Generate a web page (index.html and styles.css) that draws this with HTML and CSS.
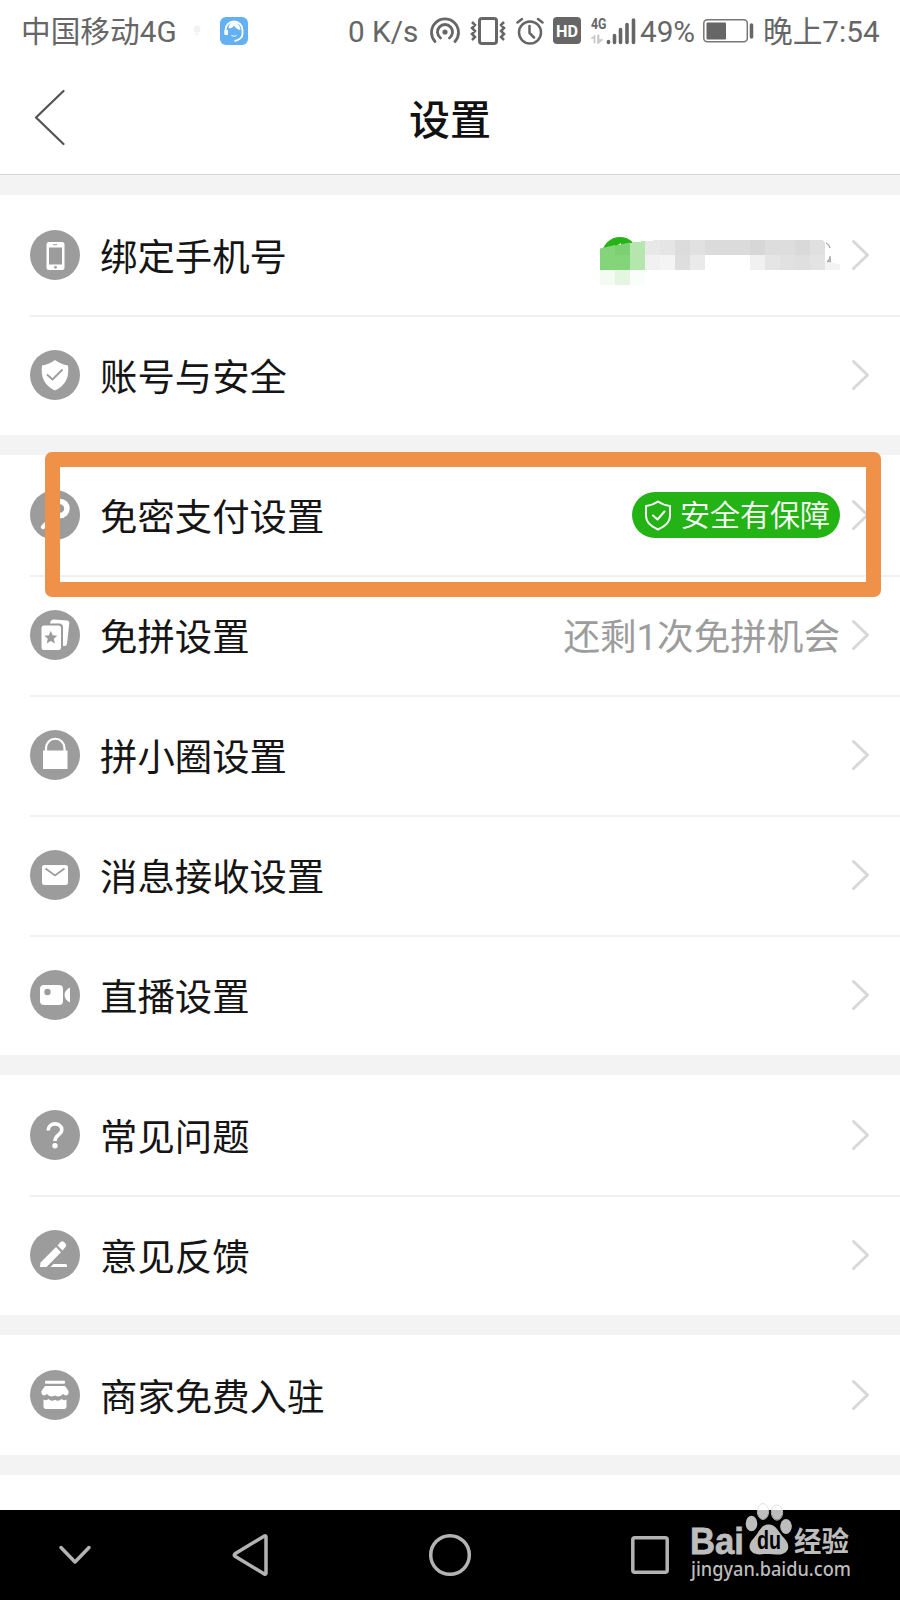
FILE: index.html
```html
<!DOCTYPE html>
<html lang="zh-CN">
<head>
<meta charset="utf-8">
<title>设置</title>
<link rel="stylesheet" href="styles.css">
</head>
<body>
<svg class="defs" width="0" height="0">
  <symbol id="chevron" viewBox="0 0 20 34"><path d="M3.500 3.500 17.500 17 3.500 30.500" fill="none" stroke="#d8d8d8" stroke-width="3" stroke-linecap="round" stroke-linejoin="round"/></symbol>
</svg>
<div class="phone">
  <div class="status">
    <span class="carrier">中国移动4G</span>
    <svg class="dot" viewBox="0 0 8 12"><circle cx="4" cy="4" r="3.500"/><circle cx="4" cy="9" r="1.500"/></svg>
    <svg class="app" viewBox="0 0 28 28"><rect width="28" height="28" rx="6" fill="#63b0f3"/><path d="M5.500 17v-4a8.500 8.500 0 0 1 17 0v4c0 3-3 6-8 7" fill="none" stroke="#fff" stroke-width="1.800"/><path d="M4.500 13H8v5H4.500zM8.500 11c1-8 11-8 12 2-3-.5-5-2-6.500-4.500-1 2-3 3.500-5.500 2.500z" fill="#fff"/><path d="M11.500 18.500q3 1.500 5 0" fill="none" stroke="#fff"/></svg>
    <span class="speed">0 K/s</span>
    <svg class="hotspot" viewBox="0 0 30 28" fill="none" stroke="#666" stroke-width="2.800" stroke-linecap="round"><circle cx="15" cy="15" r="2.600" fill="#666" stroke="none"/><path d="M10.500 21a7.500 7.500 0 1 1 9 0M5 24.500a13.500 13.500 0 1 1 20 0"/></svg>
    <svg class="vibrate" viewBox="0 0 36 28" fill="none" stroke="#666" stroke-width="2.500"><rect x="9.500" y="1.500" width="17" height="25" rx="2.500" stroke-width="3"/><path d="M2 5l3 3-3 3 3 3-3 3 3 3-3 3M34 5l-3 3 3 3-3 3 3 3-3 3 3 3"/></svg>
    <svg class="alarm" viewBox="0 0 28 28" fill="none" stroke="#666" stroke-width="2.500" stroke-linecap="round"><circle cx="14" cy="15.500" r="11"/><path d="M13.500 9v7l4.500 4.500M1.500 5.500 6 2M26.500 5.500 22 2"/></svg>
    <svg class="hd" viewBox="0 0 28 28"><rect width="28" height="27" rx="4" fill="#666"/><text x="3" y="19.500" font-size="16.500" font-weight="700" fill="#fff" textLength="22" lengthAdjust="spacingAndGlyphs">HD</text></svg>
    <svg class="signal" viewBox="0 0 46 28"><text x="0" y="11.500" font-size="15" font-weight="700" fill="#666" textLength="15.500" lengthAdjust="spacingAndGlyphs">4G</text><path d="M0 21.500 4 18v8H3v-4.500zM6.500 18h1.500v4.500h4L7.500 26.500h-1z" fill="#ccc" stroke="#ccc" stroke-width=".8"/><path d="M17.500 25.500v-1M23.500 25.500v-7M29.500 25.500v-13M36 25.500v-18M42.500 25.500V3" stroke="#666" stroke-width="3.600" stroke-linecap="round"/></svg>
    <span class="percent">49%</span>
    <svg class="battery" viewBox="0 0 52 24"><rect x=".8" y=".8" width="43.500" height="22" rx="3.500" fill="none" stroke="#777" stroke-width="1.500"/><rect x="3.500" y="3.500" width="19.500" height="17" rx="1" fill="#666"/><path d="M48.500 6v12" stroke="#666" stroke-width="3.500" stroke-linecap="round"/></svg>
    <span class="time">晚上7:54</span>
  </div>
  <header class="title-bar">
    <svg class="back" viewBox="0 0 32 58"><path d="M29.500 3 2 29.500l27.500 26.500" fill="none" stroke="#555" stroke-width="2.300" stroke-linecap="round" stroke-linejoin="round"/></svg>
    <h1>设置</h1>
  </header>

  <section class="group">
    <div class="row"><svg class="icon" viewBox="0 0 50 50"><circle cx="25" cy="25" r="25"/><rect class="w" x="16.500" y="12" width="18" height="28" rx="2.500"/><path class="g" d="M19 17.500h13v17H19zM23 14.200h4v1h-4z"/><circle class="g" cx="25.500" cy="37.300" r="1.400"/></svg><span class="label">绑定手机号</span>
      <svg class="mosaic" viewBox="0 0 240 50" shape-rendering="crispEdges">
        <circle cx="20" cy="18" r="18" fill="#25b415" shape-rendering="auto"/>
        <path d="M0 33h45v15H0z" fill="#fff"/>
        <path d="M0 11.500 15 8v25H0z" fill="#84d47a" shape-rendering="auto"/><path d="M15 18h15v15H15z" fill="#84d47a"/><path d="M15 8.500l15-3V18H15z" fill="#7dd072" shape-rendering="auto"/>
        <path d="M30 5.800 45 4v29H30z" fill="#b5e6ae"/><path d="M0 33h15v15H0z" fill="#f3fbf2"/><path d="M15 33h15v15H15z" fill="#e4f5e1"/><path d="M30 33h15v15H30z" fill="#fafefa"/>
        <path d="M45 4l15-1v15H45z" fill="#e8e8e8"/><path d="M60 3h15v15H60z" fill="#e5e5e5"/><path d="M75 3h15v15H75z" fill="#dcdcdc"/><path d="M90 3h15v15H90z" fill="#e1e1e1"/><path d="M105 3h45v15h-45z" fill="#dbdbdb"/><path d="M150 3h15v15h-15z" fill="#d7d7d7"/><path d="M165 3h30v15h-30z" fill="#dddddd"/><path d="M195 3h15v15h-15z" fill="#d9d9d9"/><path d="M210 3h13l2 3v12h-15z" fill="#e0e0e0"/>
        <path d="M45 18h15v15H45z" fill="#f1f1f1"/><path d="M60 18h15v15H60z" fill="#f4f4f4"/><path d="M75 18h15v15H75z" fill="#dedede"/><path d="M90 18h15v15H90z" fill="#eaeaea"/><path d="M150 18h15v15h-15z" fill="#f1f1f1"/><path d="M165 18h15v15h-15z" fill="#e5e5e5"/><path d="M180 18h15v15h-15z" fill="#e1e1e1"/><path d="M195 18h15v15h-15z" fill="#dfdfdf"/><path d="M210 18h15v15h-15z" fill="#e3e3e3"/>
        <path d="M225 25.500h7l8 2v5.500h-15z" fill="#f3f3f3"/>
        <g shape-rendering="auto"><path d="M18 8l3-2v2z" fill="#e8f8e6"/><path d="M226 6q3 1 4 5M230 19q0 4-3 5.500h3.500z" fill="none" stroke="#aaa" stroke-width="1.300"/></g>
      </svg>
      <svg class="chev"><use href="#chevron"/></svg></div>
    <div class="row"><svg class="icon" viewBox="0 0 50 50"><circle cx="25" cy="25" r="25"/><path class="w" d="M25 10c4 3 8 4.500 13 5.500 1.500 11-2 20-13 25-11-5-14.500-14-13-25 5-1 9-2.500 13-5.500z"/><path class="gl" d="M17 24.500l5.500 5 10-10"/></svg><span class="label">账号与安全</span><svg class="chev"><use href="#chevron"/></svg></div>
  </section>

  <section class="group">
    <div class="row"><svg class="icon" viewBox="0 0 50 50"><circle cx="25" cy="25" r="25"/><circle cx="30" cy="18.500" r="7" fill="none" stroke="#fff" stroke-width="5.500"/><path d="M24.500 25.500 13 37" stroke="#fff" stroke-width="4.500" stroke-linecap="round"/></svg><span class="label">免密支付设置</span>
      <span class="badge"><svg viewBox="0 0 28 31" fill="none" stroke="#fff" stroke-width="2" stroke-linejoin="round" stroke-linecap="round"><path d="M14 1.500c4 2.800 7.500 4 12 4.500v10c0 6-5 10.500-12 13.500C7 26.500 2 22 2 16V6c4.500-.5 8-1.700 12-4.500z"/><path d="M9 15.500l4.500 4 7-8"/></svg><span class="badge-text">安全有保障</span></span>
      <svg class="chev"><use href="#chevron"/></svg></div>
    <div class="row"><svg class="icon" viewBox="0 0 50 50"><circle cx="25" cy="25" r="25"/><path class="w" d="M20 13.500q.5-4 4-4l13.500 1q2 .5 1.800 2.500l-2.300 21q-.5 2-2.500 2H33V17q-.5-3.500-3.500-3.500z"/><rect class="w" x="11.500" y="15.500" width="19.500" height="24.500" rx="2.500"/><path class="g" d="M20.800 20.800l1.900 4.500 4.600.4-3.500 3.100 1.100 4.600-4.100-2.400-4.100 2.400 1.100-4.600-3.500-3.100 4.600-.4z"/></svg><span class="label">免拼设置</span><span class="note">还剩1次免拼机会</span><svg class="chev"><use href="#chevron"/></svg></div>
    <div class="row"><svg class="icon" viewBox="0 0 50 50"><circle cx="25" cy="25" r="25"/><path class="w" d="M13 20.500h24.500V39H13z"/><path d="M16 21v-3a9 9 0 0 1 18.500 0v3" fill="none" stroke="#fff" stroke-width="2.200"/></svg><span class="label">拼小圈设置</span><svg class="chev"><use href="#chevron"/></svg></div>
    <div class="row"><svg class="icon" viewBox="0 0 50 50"><circle cx="25" cy="25" r="25"/><rect class="w" x="12" y="15" width="26" height="20" rx="2.500"/><path class="gl" d="M15.500 18.500l9.500 7 9.500-7"/></svg><span class="label">消息接收设置</span><svg class="chev"><use href="#chevron"/></svg></div>
    <div class="row"><svg class="icon" viewBox="0 0 50 50"><circle cx="25" cy="25" r="25"/><rect class="w" x="10" y="15" width="23" height="20" rx="4"/><circle class="g" cx="17.500" cy="22" r="3.200"/><path class="w" d="M40 17.500v15q-5.500-3-5.500-7.500t5.500-7.500z"/></svg><span class="label">直播设置</span><svg class="chev"><use href="#chevron"/></svg></div>
  </section>

  <section class="group">
    <div class="row"><svg class="icon" viewBox="0 0 50 50"><circle cx="25" cy="25" r="25"/><path d="M18.200 20.500c0-9 13.600-8.500 13.600-.8 0 5-6.800 5-6.800 11.300" fill="none" stroke="#fff" stroke-width="3.600"/><circle class="w" cx="25" cy="35.700" r="2.700"/></svg><span class="label">常见问题</span><svg class="chev"><use href="#chevron"/></svg></div>
    <div class="row"><svg class="icon" viewBox="0 0 50 50"><circle cx="25" cy="25" r="25"/><path class="w" d="M10.500 32.500 26 17l5 5.300L16.500 37H10zM27.500 15.500l3-3.500q2-1.500 3.500 0l1.500 1.500q1.500 2 0 3.500l-3 3.500zM23.500 34h12.500q1.500.3 1 3H20.500z"/></svg><span class="label">意见反馈</span><svg class="chev"><use href="#chevron"/></svg></div>
  </section>

  <section class="group">
    <div class="row"><svg class="icon" viewBox="0 0 50 50"><circle cx="25" cy="25" r="25"/><rect class="w" x="15" y="10.800" width="20" height="3" rx="1"/><path class="w" d="M15 16h20l3.500 5v2.500q-2 3.500-5.500.5-3 4-8 1.500-5 2.500-8-1.500-3.500 3-5.500-.5V21zM13.500 29.500q3 1.500 5-.5 3 3 6.500.8 3.500 2.200 6.500-.8 2 2 5 .5V36q0 3-2.500 3H16q-2.500 0-2.500-3z"/></svg><span class="label">商家免费入驻</span><svg class="chev"><use href="#chevron"/></svg></div>
  </section>

  <section class="group rest"></section>

  <nav class="nav">
    <svg viewBox="0 0 40 50"><path d="M6 17.500 20 32l14-14.500"/></svg>
    <svg viewBox="0 0 40 50"><path d="M36 6.500v37q-.5 1-2 .3L5 26.300q-1.500-1.300 0-2.600L34 6.200q1.500-.7 2 .3z"/></svg>
    <svg viewBox="0 0 50 50"><circle cx="25" cy="25" r="19.300"/></svg>
    <svg viewBox="0 0 40 50"><rect x="2.800" y="7.800" width="34.400" height="34.400" rx="2"/></svg>
  </nav>

  <div class="highlight"></div>
  <svg class="watermark" viewBox="0 0 170 100">
    <g fill="#bdbdbd">
      <g fill="none" stroke="#d9d9d9" stroke-width=".8"><ellipse cx="73" cy="11.500" rx="5.700" ry="8"/><ellipse cx="87" cy="12.500" rx="5.700" ry="7.700"/></g>
      <path d="M67.500 10h11c.5 12-11.500 12-11 0zM81.500 10h11c.5 13-11.500 13-11 0z"/>
      <ellipse cx="61.500" cy="23.500" rx="5.800" ry="7.700"/><ellipse cx="96" cy="26.500" rx="5.800" ry="7.500"/>
      <path d="M78.500 24.500c8 0 10 8 16 14 8 9 2 16-6 16-5 0-13-1-19 0-9 0-14-8-6-16 6-6 7-14 15-14z"/>
      <text class="bai" x="0" y="53.500" textLength="54" lengthAdjust="spacingAndGlyphs">Bai</text>
      <text class="du" x="67" y="49" textLength="24" lengthAdjust="spacingAndGlyphs">du</text>
      <text class="exp" x="104" y="52" textLength="55" lengthAdjust="spacingAndGlyphs">经验</text>
      <text class="url" x="1" y="75.500" textLength="160" lengthAdjust="spacingAndGlyphs">jingyan.baidu.com</text>
    </g>
  </svg>
</div>
</body>
</html>
```
FILE: styles.css
```css
* { box-sizing: border-box; }
body { margin: 0; background: #fff; font-family: Roboto, "Noto Sans CJK SC", sans-serif; }
.defs { position: absolute; }
.phone { position: relative; width: 900px; height: 1600px; overflow: hidden; background: #f3f3f3; display: flex; flex-direction: column; }
svg { display: block; flex: none; }

.status { height: 62px; flex: none; background: #fff; color: #666; display: flex; align-items: center; padding-left: 21px; font-size: 29.7px; line-height: 62px; white-space: nowrap; }
.status span { padding-top: 1px; }
.carrier { width: 172px; }
.dot { width: 8px; height: 12px; fill: #f2f2f2; margin-right: 19px; }
.app { width: 28px; height: 28px; margin-right: 99px; }
.speed { width: 83px; padding-left: 1px; }
.hotspot { width: 30px; height: 28px; margin-right: 10px; }
.vibrate { width: 36px; height: 28px; margin-right: 10px; }
.alarm { width: 28px; height: 28px; margin-right: 9px; }
.hd { width: 28px; height: 28px; margin-right: 10px; }
.signal { width: 46px; height: 28px; margin-right: 3px; }
.percent { width: 63px; }
.battery { width: 52px; height: 24px; margin-right: 8px; }

.title-bar { height: 113px; flex: none; background: #fff; border-bottom: 1px solid #d5d5d5; display: grid; grid-template-columns: 100px 1fr 100px; align-items: center; }
.back { width: 32px; height: 58px; margin: 0 0 3px 34px; }
h1 { margin: 6px 0 0; font-size: 41px; line-height: 60px; font-weight: 500; color: #111; text-align: center; }

.group { margin-top: 20px; background: #fff; flex: none; }
.row { height: 120px; margin-left: 30px; padding-right: 30px; display: flex; align-items: center; }
.row + .row { background: linear-gradient(#f1f1f1, #f1f1f1) top / 100% 2px no-repeat; }
.icon { width: 50px; height: 50px; fill: #9c9c9c; margin-right: 20px; }
.w { fill: #fff; }
.g { fill: #9c9c9c; }
.gl { fill: none; stroke: #9c9c9c; stroke-width: 1.8; }
.label { padding-top: 6px; font-size: 37.4px; line-height: 60px; color: #151515; flex: 1; white-space: nowrap; }
.chev { width: 20px; height: 34px; margin-left: 10px; }
.note { padding-top: 6px; font-size: 36.6px; line-height: 60px; color: #9c9c9c; }
.badge { width: 208px; height: 46px; border-radius: 23px; background: #24b314; color: #fff; font-size: 30px; line-height: 46px; display: flex; align-items: center; padding-left: 12px; gap: 8px; white-space: nowrap; }
.badge-text { padding-top: 2px; font-weight: 350; }
.badge svg { width: 28px; height: 31px; }
.mosaic { width: 240px; height: 50px; margin-top: 14px; }
.rest { flex: 1; }

.nav { height: 90px; flex: none; background: #000; display: grid; grid-template-columns: 150px 200px 200px 200px; justify-items: center; align-items: center; }
.nav svg { height: 50px; fill: none; stroke: #b3b3b3; stroke-width: 3.5; stroke-linecap: round; stroke-linejoin: round; }

.highlight { position: absolute; left: 45px; top: 452px; width: 836px; height: 145px; background: linear-gradient(#f0914a, #f0914a) top / 100% 15px no-repeat, linear-gradient(#f0914a, #f0914a) bottom / 100% 15px no-repeat, linear-gradient(#f0914a, #f0914a) left / 15px 100% no-repeat, linear-gradient(#f0914a, #f0914a) right / 15px 100% no-repeat; border-radius: 7px; }
.watermark { position: absolute; left: 690px; top: 1500px; width: 170px; height: 100px; }
.bai { font: 700 37px "Liberation Sans", sans-serif; stroke: #bdbdbd; stroke-width: .8px; }
.du { font: 700 25px "Liberation Sans", sans-serif; fill: #000; }
.exp { font: 700 28px "Noto Sans CJK SC", sans-serif; }
.url { font: 500 20.5px "Noto Sans", sans-serif; }
```
